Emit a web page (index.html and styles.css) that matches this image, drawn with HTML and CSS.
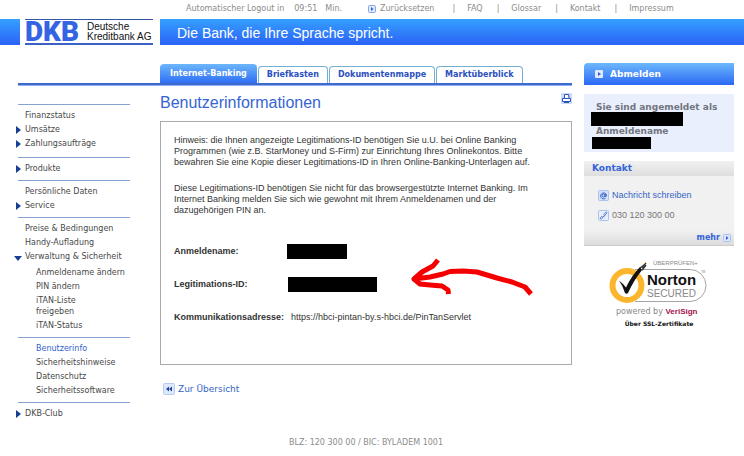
FILE: index.html
```html
<!DOCTYPE html>
<html lang="de">
<head>
<meta charset="utf-8">
<title>DKB – Benutzerinformationen</title>
<link rel="stylesheet" href="styles.css">
</head>
<body>
<header class="site-header">
  <div class="meta">
    <span class="logout">Automatischer Logout in</span>
    <span class="time">09:51</span>
    <span class="minutes">Min.</span>
    <a class="reset" href="#"><svg class="icon-step" viewBox="0 0 8 8" aria-hidden="true"><rect x=".5" y=".5" width="7" height="7" rx="1" fill="#dbe7fd" stroke="#88a8e8"/><path d="M3 2l2.500 2L3 6z" fill="#3563cf"/></svg>Zurücksetzen</a>
    <nav class="meta-links" aria-label="Service">
      <a href="#">FAQ</a><a href="#">Glossar</a><a href="#">Kontakt</a><a href="#">Impressum</a>
    </nav>
  </div>
  <div class="banner">
    <div class="banner-stub"></div>
    <a class="logo" href="#"><span class="logo-mark">DKB</span><span class="logo-name">Deutsche<br>Kreditbank AG</span></a>
    <div class="slogan">Die Bank, die Ihre Sprache spricht.</div>
  </div>
</header>

<div class="page">
  <div class="primary">
    <nav class="tabs" aria-label="Bereiche">
      <a class="tab tab-active" href="#">Internet-Banking</a>
      <a class="tab" href="#">Briefkasten</a>
      <a class="tab" href="#">Dokumentenmappe</a>
      <a class="tab" href="#">Marktüberblick</a>
    </nav>
    <div class="columns">
      <nav class="side-nav" aria-label="Internet-Banking">
        <ul class="group group-first">
          <li><a href="#">Finanzstatus</a></li>
          <li class="closed"><a href="#">Umsätze</a></li>
          <li class="closed"><a href="#">Zahlungsaufträge</a></li>
        </ul>
        <ul class="group">
          <li class="closed"><a href="#">Produkte</a></li>
        </ul>
        <ul class="group">
          <li><a href="#">Persönliche Daten</a></li>
          <li class="closed"><a href="#">Service</a></li>
        </ul>
        <ul class="group">
          <li><a href="#">Preise &amp; Bedingungen</a></li>
          <li><a href="#">Handy-Aufladung</a></li>
          <li class="open"><a href="#">Verwaltung &amp; Sicherheit</a></li>
        </ul>
        <ul class="sub">
          <li><a href="#">Anmeldename ändern</a></li>
          <li><a href="#">PIN ändern</a></li>
          <li><a href="#">iTAN-Liste<br>freigeben</a></li>
          <li><a href="#">iTAN-Status</a></li>
        </ul>
        <ul class="sub sub-ruled">
          <li><a class="current" href="#">Benutzerinfo</a></li>
          <li><a href="#">Sicherheitshinweise</a></li>
          <li><a href="#">Datenschutz</a></li>
          <li><a href="#">Sicherheitssoftware</a></li>
        </ul>
        <ul class="group">
          <li class="closed"><a href="#">DKB-Club</a></li>
        </ul>
      </nav>

      <main class="content">
        <div class="title-row">
          <h1>Benutzerinformationen</h1>
          <button class="print" type="button" aria-label="Drucken"><svg viewBox="0 0 11 11" aria-hidden="true"><rect width="11" height="11" rx="1" fill="#c9dafa"/><path d="M3.500 5V1.500h4L8 5M1.500 5.500h8v3h-8zM3 9.500h5" fill="#fff" stroke="#2d55bd"/></svg></button>
        </div>
        <section class="box">
          <p>Hinweis: die Ihnen angezeigte Legitimations-ID benötigen Sie u.U. bei Online Banking Programmen (wie z.B. StarMoney und S-Firm) zur Einrichtung Ihres Onlinekontos. Bitte bewahren Sie eine Kopie dieser Legitimations-ID in Ihren Online-Banking-Unterlagen auf.</p>
          <p>Diese Legitimations-ID benötigen Sie nicht für das browsergestützte Internet Banking. Im Internet Banking melden Sie sich wie gewohnt mit Ihrem Anmeldenamen und der dazugehörigen PIN an.</p>
          <dl class="facts">
            <dt>Anmeldename:</dt><dd><span class="redacted redacted-name"></span></dd>
            <dt>Legitimations-ID:</dt><dd><span class="redacted redacted-id"></span></dd>
            <dt>Kommunikationsadresse:</dt><dd class="address">https://hbci-pintan-by.s-hbci.de/PinTanServlet</dd>
          </dl>
          <svg class="arrow" viewBox="0 0 124 40" aria-hidden="true"><path d="M120 36L114 29 101 24 86 20 76 17 66 14 52 13 39 13.500 32 16 19 19 3 21M27 2L22 8 11 14 3 21 9 26 19 27 31 28 37 32 37.500 36" fill="none" stroke="#f40000" stroke-width="5" stroke-linejoin="round"/></svg>
        </section>
        <a class="back" href="#"><svg viewBox="0 0 12 12" aria-hidden="true"><rect x=".5" y=".5" width="11" height="11" rx="1" fill="#dde8fc" stroke="#b5cbf3"/><path d="M6 3.500v5L3 6zM9 3.500v5L6 6z" fill="#23449a"/></svg>Zur Übersicht</a>
        <footer class="bank-codes">BLZ: 120 300 00 / BIC: BYLADEM 1001</footer>
      </main>
    </div>
  </div>

  <aside class="aside">
    <button class="sign-out" type="button"><svg viewBox="0 0 8 8" aria-hidden="true"><rect width="8" height="8" rx="1" fill="#dfeaff"/><path d="M3 2l3 2-3 2z" fill="#3563cf"/></svg>Abmelden</button>
    <section class="session">
      <div>Sie sind angemeldet als</div>
      <span class="redacted redacted-user"></span>
      <div>Anmeldename</div>
      <span class="redacted redacted-login"></span>
    </section>
    <section class="contact">
      <h2>Kontakt</h2>
      <ul>
        <li><svg viewBox="0 0 11 11" aria-hidden="true"><rect x=".5" y=".5" width="10" height="10" rx="1" fill="#d3e1fb" stroke="#a9c2f0"/><path d="M7 4v2.500q1.500.500 1.500-1.500A3 3 0 1 0 7.500 8.300M7 5.500a1.500 1.500 0 1 1-3 0 1.500 1.500 0 0 1 3 0z" fill="none" stroke="#2d55bd" stroke-width=".9"/></svg><a href="#">Nachricht schreiben</a></li>
        <li><svg viewBox="0 0 11 11" aria-hidden="true"><rect x=".5" y=".5" width="10" height="10" rx="1" fill="#e6eefc" stroke="#a9c2f0"/><path d="M2 8.500Q3.500 9.500 5 7.500L8.500 3.500Q9.500 2 8 2L6 4.500Q7 5.500 5.500 6.500T3.500 6.500z" fill="#fff" stroke="#4a70cc" stroke-width=".9"/></svg><span>030 120 300 00</span></li>
      </ul>
      <a class="more" href="#">mehr<svg viewBox="0 0 8 8" aria-hidden="true"><rect x=".5" y=".5" width="7" height="7" rx="1" fill="#dbe7fd" stroke="#a9c2f0"/><path d="M3 2l2.500 2L3 6z" fill="#3563cf"/></svg></a>
    </section>
    <section class="seal">
      <svg class="norton" viewBox="0 0 100 56" role="img" aria-label="Norton Secured, powered by VeriSign">
        <path d="M26 10.500h55a16 16 0 0 1 0 32H26" fill="none" stroke="#a5a5a5"/>
        <circle cx="18" cy="26.500" r="14.500" fill="#fff" stroke="#fbb62d" stroke-width="6"/>
        <path d="M10 21.500q4 3 7 7Q23 16 31 8l2 3Q25 21 19 34q-1.500 1.500-3 0-2-7-6-12.500z" fill="#111"/>
        <path d="M31 9l3-2v3l3-4M34 7l3-3" fill="none" stroke="#333" stroke-width="1.500"/><path d="M35 5l2-2" stroke="#f3a82c"/>
        <text class="seal-check" x="44" y="6">ÜBERPRÜFEN+</text>
        <text class="seal-brand" x="38" y="26">Norton</text>
        <text class="seal-secured" x="38" y="38">SECURED</text>
        <text class="seal-tm" x="92" y="14">TM</text>
        <text class="seal-powered" x="7" y="55">powered by <tspan class="seal-verisign">VeriSign</tspan></text>
      </svg>
      <a class="ssl" href="#">Über SSL-Zertifikate</a>
    </section>
  </aside>
</div>
</body>
</html>
```
FILE: styles.css
```css
* { box-sizing: border-box; }
body {
  margin: 0;
  background: #fff;
  color: #333;
  font-family: "DejaVu Sans", Verdana, sans-serif;
  font-size: 8px;
  line-height: 14px;
}
a { color: inherit; text-decoration: none; }
ul, dl, dd, p, h1, h2 { margin: 0; padding: 0; list-style: none; }
button { border: 0; padding: 0; font: inherit; cursor: pointer; }
svg { display: block; flex: none; overflow: visible; }

.meta {
  display: flex;
  align-items: center;
  height: 19px;
  padding: 0 0 2px 186px;
  color: #8c8c8c;
  white-space: nowrap;
}
.time { margin-left: 10px; }
.minutes { margin-left: 8px; }
.reset { display: flex; align-items: center; gap: 4px; margin-left: 26px; }
.reset svg { width: 8px; height: 8px; }
.meta-links { display: flex; margin-left: 18px; }
.meta-links a::before { content: "|"; margin-right: 12px; }
.meta-links a + a { margin-left: 14px; }

.banner { display: flex; height: 26px; }
.banner-stub { width: 20px; }
.banner-stub, .slogan { background: linear-gradient(#35a0ff, #2b62f6); }
.logo {
  display: flex;
  align-items: center;
  width: 128px;
  margin: 0 7px 0 5px;
  border-top: 1px solid #3456a4;
  border-bottom: 2px solid #3a62c6;
  font-family: "Liberation Sans", Arial, sans-serif;
  white-space: nowrap;
}
.logo-mark { width: 62px; color: #3464e4; font: 900 28px/22px Roboto, sans-serif; }
.logo-name { color: #111; font-size: 10px; line-height: 10px; }
.slogan {
  flex: 1;
  padding-left: 17px;
  color: #fff;
  font: 14px/28px "Liberation Sans", Arial, sans-serif;
}

.page { display: flex; gap: 12px; padding: 18px 10px 0 18px; }
.primary { flex: 1; min-width: 0; }
.tabs {
  display: flex;
  align-items: flex-end;
  gap: 1px;
  height: 23px;
  padding: 0 0 2px 142px;
  border-bottom: 1px solid #8db0fa;
  box-shadow: inset 0 -2px #3f6acb;
  font-weight: bold;
  white-space: nowrap;
}
.tab {
  height: 17px;
  padding: 0 8px;
  border: 1px solid #74b0d2;
  border-bottom: 0;
  border-radius: 4px 4px 0 0;
  color: #2c50c0;
  line-height: 16px;
}
.tab-active {
  height: 19px;
  padding: 0 10px;
  border: 0;
  background: linear-gradient(#6cb6fb, #2f6ff5);
  color: #fff;
  line-height: 20px;
}

.columns { display: flex; gap: 30px; }
.side-nav { flex: 0 0 112px; padding-top: 18px; color: #484848; white-space: nowrap; }
.group { padding: 4px 0 4px 7px; border-top: 1px solid #86a4cf; }
.group-first { padding-bottom: 6px; }
.group li { position: relative; height: 14px; }
.closed::before, .open::before { content: ""; position: absolute; background: #163f94; }
.closed::before { left: -9px; top: 3px; width: 5px; height: 8px; clip-path: polygon(0 0, 100% 50%, 0 100%); }
.open::before { left: -11px; top: 6px; width: 8px; height: 5px; clip-path: polygon(0 0, 100% 0, 50% 100%); }
.group:has(+ .sub) { padding-bottom: 0; }
.sub { padding: 3px 0 3px 18px; line-height: 11px; }
.sub li { padding-bottom: 3px; }
.sub-ruled { padding-top: 5px; border-top: 1px solid #86a4cf; }
.current { color: #2f5fcd; }

.content { flex: 1; min-width: 0; }
.title-row { display: flex; justify-content: space-between; padding-top: 7px; height: 35px; }
h1 { color: #3565d2; font: 16px/20px "Liberation Sans", Arial, sans-serif; }
.print { width: 11px; height: 11px; background: none; }
.box {
  position: relative;
  min-height: 244px;
  padding: 13px 13px 0;
  border: 1px solid #aaa;
  font: 9px/11px "Liberation Sans", Arial, sans-serif;
}
.box p { margin-bottom: 15px; }
.facts {
  display: grid;
  grid-template-columns: max-content 1fr;
  grid-auto-rows: 33px;
  column-gap: 7px;
  padding-top: 4px;
  line-height: 33px;
}
dt { font-weight: bold; }
dd { display: flex; align-items: center; }
.redacted { display: block; background: #000; }
.redacted-name { width: 60px; height: 15px; margin-left: -4px; }
.redacted-id { width: 89px; height: 15px; margin-left: -3px; }
.arrow { position: absolute; left: 250px; top: 136px; width: 124px; height: 40px; }
.back { display: flex; align-items: center; gap: 3px; margin: 17px 0 0 3px; color: #3565c4; font-size: 9px; }
.back svg { width: 12px; height: 12px; }
.bank-codes { padding-top: 40px; color: #8c8c8c; text-align: center; }

.aside { flex: 0 0 150px; }
.sign-out {
  display: flex;
  align-items: center;
  gap: 7px;
  width: 100%;
  height: 22px;
  padding-left: 11px;
  border-radius: 4px 0 0 0;
  background: linear-gradient(#6cb8fc, #2b68f5);
  color: #fff;
  font-size: 9px;
  font-weight: bold;
}
.sign-out svg { width: 8px; height: 8px; }
.session {
  height: 58px;
  margin-top: 9px;
  padding: 8px 0 0 12px;
  background: #eaeffd;
  color: #71757d;
  font-size: 9px;
  font-weight: bold;
  line-height: 10px;
  white-space: nowrap;
}
.redacted-user { width: 92px; height: 14px; margin-left: -5px; }
.redacted-login { width: 59px; height: 12px; margin: 1px 0 0 -4px; }
.contact { margin-top: 9px; background: #f1f1f1; }
h2 {
  padding-left: 8px;
  border-radius: 4px 0 0 0;
  background: linear-gradient(#f1f1f1, #dedede);
  color: #3563dc;
  font-size: 9px;
  line-height: 15px;
}
.contact ul {
  display: grid;
  gap: 6px;
  padding: 12px 0 8px 14px;
  font: 9px/14px "Liberation Sans", Arial, sans-serif;
}
.contact li { display: flex; align-items: center; gap: 3px; color: #777; }
.contact li a { color: #3565c4; }
.contact li svg { width: 11px; height: 11px; }
.more {
  display: flex;
  align-items: center;
  justify-content: flex-end;
  gap: 3px;
  height: 16px;
  padding-right: 3px;
  border-bottom: 1px solid #ccc;
  background: linear-gradient(#f1f1f1, #dcdcdc);
  color: #3563dc;
  font-weight: bold;
}
.more svg { width: 8px; height: 8px; }

.seal { display: flex; flex-direction: column; align-items: center; gap: 4px; padding-top: 13px; }
.norton { width: 100px; height: 56px; }
.seal text { font-family: "Liberation Sans", sans-serif; fill: #888; }
.seal .seal-check { font-size: 6px; }
.seal .seal-brand { font-size: 15px; font-weight: bold; fill: #111; }
.seal .seal-secured { font-size: 10px; }
.seal .seal-tm { font-size: 3px; }
.seal .seal-powered { font-family: "DejaVu Sans", sans-serif; font-size: 8px; }
.seal .seal-verisign { font-family: "Liberation Sans", sans-serif; font-weight: bold; fill: #a0114c; }
.ssl { color: #111; font-size: 6px; font-weight: bold; line-height: 10px; }
```
